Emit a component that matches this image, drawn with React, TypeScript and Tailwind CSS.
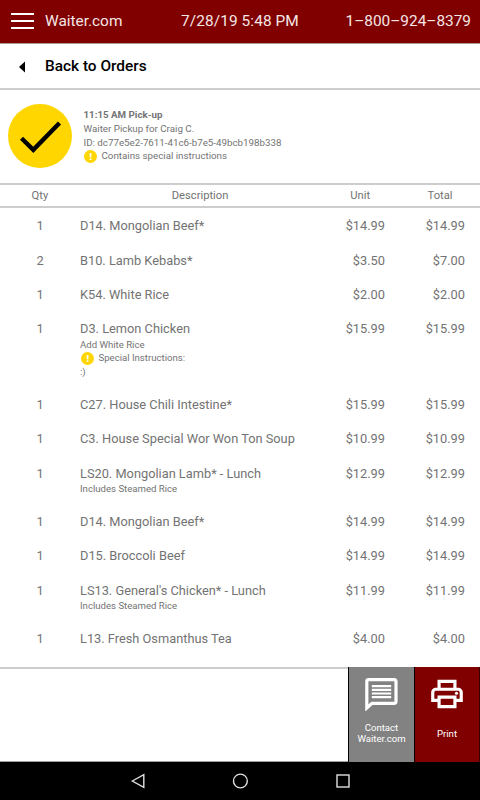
import { MdOutlinePrint } from 'react-icons/md';

type OrderLine = {
  qty: number;
  name: string;
  unit: string;
  total: string;
  modifier?: string;
  instructions?: string;
};

const LINES: OrderLine[] = [
  { qty: 1, name: 'D14. Mongolian Beef*', unit: '$14.99', total: '$14.99' },
  { qty: 2, name: 'B10. Lamb Kebabs*', unit: '$3.50', total: '$7.00' },
  { qty: 1, name: 'K54. White Rice', unit: '$2.00', total: '$2.00' },
  { qty: 1, name: 'D3. Lemon Chicken', unit: '$15.99', total: '$15.99', modifier: 'Add White Rice', instructions: ':)' },
  { qty: 1, name: 'C27. House Chili Intestine*', unit: '$15.99', total: '$15.99' },
  { qty: 1, name: 'C3. House Special Wor Won Ton Soup', unit: '$10.99', total: '$10.99' },
  { qty: 1, name: 'LS20. Mongolian Lamb* - Lunch', unit: '$12.99', total: '$12.99', modifier: 'Includes Steamed Rice' },
  { qty: 1, name: 'D14. Mongolian Beef*', unit: '$14.99', total: '$14.99' },
  { qty: 1, name: 'D15. Broccoli Beef', unit: '$14.99', total: '$14.99' },
  { qty: 1, name: "LS13. General's Chicken* - Lunch", unit: '$11.99', total: '$11.99', modifier: 'Includes Steamed Rice' },
  { qty: 1, name: 'L13. Fresh Osmanthus Tea', unit: '$4.00', total: '$4.00' },
];

function AlertIcon() {
  return (
    <svg className="h-[13px] w-[13px] shrink-0" viewBox="0 0 13 13">
      <circle cx="6.5" cy="6.5" r="6.5" fill="#ffd600" />
      <rect x="5.7" y="3" width="1.7" height="4.4" fill="#fff" />
      <rect x="5.7" y="8.4" width="1.7" height="1.6" fill="#fff" />
    </svg>
  );
}

function TopBar() {
  return (
    <header className="flex h-11 shrink-0 items-center justify-between border-b border-[#a89898] bg-[#800000] pr-[9px] pl-[11px] text-[15.4px] text-[#f4e6e6]">
      <div className="flex items-center">
        <div className="mr-[11px] flex w-[23px] flex-col gap-[5px]">
          <span className="h-[2px] bg-white" />
          <span className="h-[2px] bg-white" />
          <span className="h-[2px] bg-white" />
        </div>
        <span className="w-[136px]">Waiter.com</span>
        <span className="tracking-[0.1px]">7/28/19 5:48 PM</span>
      </div>
      <span>1–800–924–8379</span>
    </header>
  );
}

function OrderSummary() {
  return (
    <section className="flex h-[95px] shrink-0 items-center border-b-2 border-[#cdcdcd] pb-[2px] pl-2">
      <svg className="h-16 w-16 shrink-0" viewBox="0 0 64 64">
        <circle cx="32" cy="32" r="32" fill="#ffd600" />
        <path d="M13.5 34.2 L25.3 45.8 L51.5 19" fill="none" stroke="#000" strokeWidth="4.4" />
      </svg>
      <div className="ml-[11.5px] text-[9.75px] leading-[13.7px]">
        <p className="font-bold">11:15 AM Pick-up</p>
        <p>Waiter Pickup for Craig C.</p>
        <p>ID: dc77e5e2-7611-41c6-b7e5-49bcb198b338</p>
        <p className="flex items-center gap-[5px]">
          <AlertIcon />
          Contains special instructions
        </p>
      </div>
    </section>
  );
}

function OrderRow({ line }: { line: OrderLine }) {
  return (
    <div className="flex pt-[9px] pb-[7.4px] text-[12.8px] leading-[18px]">
      <span className="w-20 text-center">{line.qty}</span>
      <div className="w-[240px]">
        <p>{line.name}</p>
        <div className="-mt-[0.7px] mb-[0.7px] text-[9.6px] leading-[13.8px]">
          {line.modifier && <p>{line.modifier}</p>}
          {line.instructions && (
            <>
              <p className="flex items-center gap-[4.5px] pl-px">
                <AlertIcon />
                Special Instructions:
              </p>
              <p>{line.instructions}</p>
            </>
          )}
        </div>
      </div>
      <span className="w-[65px] text-right">{line.unit}</span>
      <span className="w-20 text-right">{line.total}</span>
    </div>
  );
}

function ActionBar() {
  return (
    <footer className="flex h-[95px] shrink-0 justify-end text-center text-[9.6px] leading-[11px] text-white">
      <div className="flex-1 border-t-2 border-b border-t-[#cdcdcd] border-b-[#a0a0a0]" />
      <button className="flex w-[66px] flex-col items-center border-l border-black bg-[#828282] pt-[11px]">
        <svg className="h-[33px] w-[33px]" viewBox="0 0 33 33" fill="none" stroke="#fff">
          <path d="M1.8 30 V3.5 Q1.8 1.7 3.8 1.7 H29 Q31 1.7 31 3.7 V23.5 Q31 25.3 29 25.3 H7 Z" strokeWidth="3.2" />
          <path d="M6.8 8.2 H26.2 M6.8 11.9 H26.2 M6.8 15.5 H26.2 M6.8 19.2 H26.2" strokeWidth="2.2" />
        </svg>
        <span className="mt-[11px]">
          Contact
          <br />
          Waiter.com
        </span>
      </button>
      <button className="flex w-[66px] flex-col items-center border-x border-l-black border-r-[#3a0000] bg-[#800000] pt-[8px]">
        <MdOutlinePrint className="h-[38px] w-[38px]" />
        <span className="mt-[15px]">Print</span>
      </button>
    </footer>
  );
}

function SystemNav() {
  return (
    <nav className="flex h-[38px] shrink-0 items-center justify-center bg-black">
      <svg className="h-4 w-[220px]" viewBox="0 0 220 16" fill="none" stroke="#e0e0e0" strokeWidth="1.4">
        <path d="M2.3 8 L13.8 1.6 V14.4 Z" />
        <circle cx="110.4" cy="8" r="6.9" />
        <rect x="207" y="2" width="12" height="12" />
      </svg>
    </nav>
  );
}

export default function App() {
  return (
    <div className="flex h-[800px] w-[480px] flex-col bg-white font-['Roboto',sans-serif] text-[#737373]">
      <TopBar />
      <div className="flex h-[46px] shrink-0 items-center border-b-2 border-[#cdcdcd] pt-px pl-[19px] text-[15.4px] font-medium text-black">
        <svg className="mr-[20px] h-3 w-[6px]" viewBox="0 0 6 12">
          <path d="M0 6 L6 0.4 V11.6 Z" fill="#000" />
        </svg>
        Back to Orders
      </div>
      <OrderSummary />
      <div className="flex h-[23px] shrink-0 items-center border-b-2 border-[#cdcdcd] pt-[2px] text-center text-[11.2px]">
        <span className="w-20">Qty</span>
        <span className="w-[241px]">Description</span>
        <span className="w-20">Unit</span>
        <span className="w-20">Total</span>
      </div>
      <main className="flex-1 pt-[0.15px]">
        {LINES.map((line, i) => (
          <OrderRow key={i} line={line} />
        ))}
      </main>
      <ActionBar />
      <SystemNav />
    </div>
  );
}
